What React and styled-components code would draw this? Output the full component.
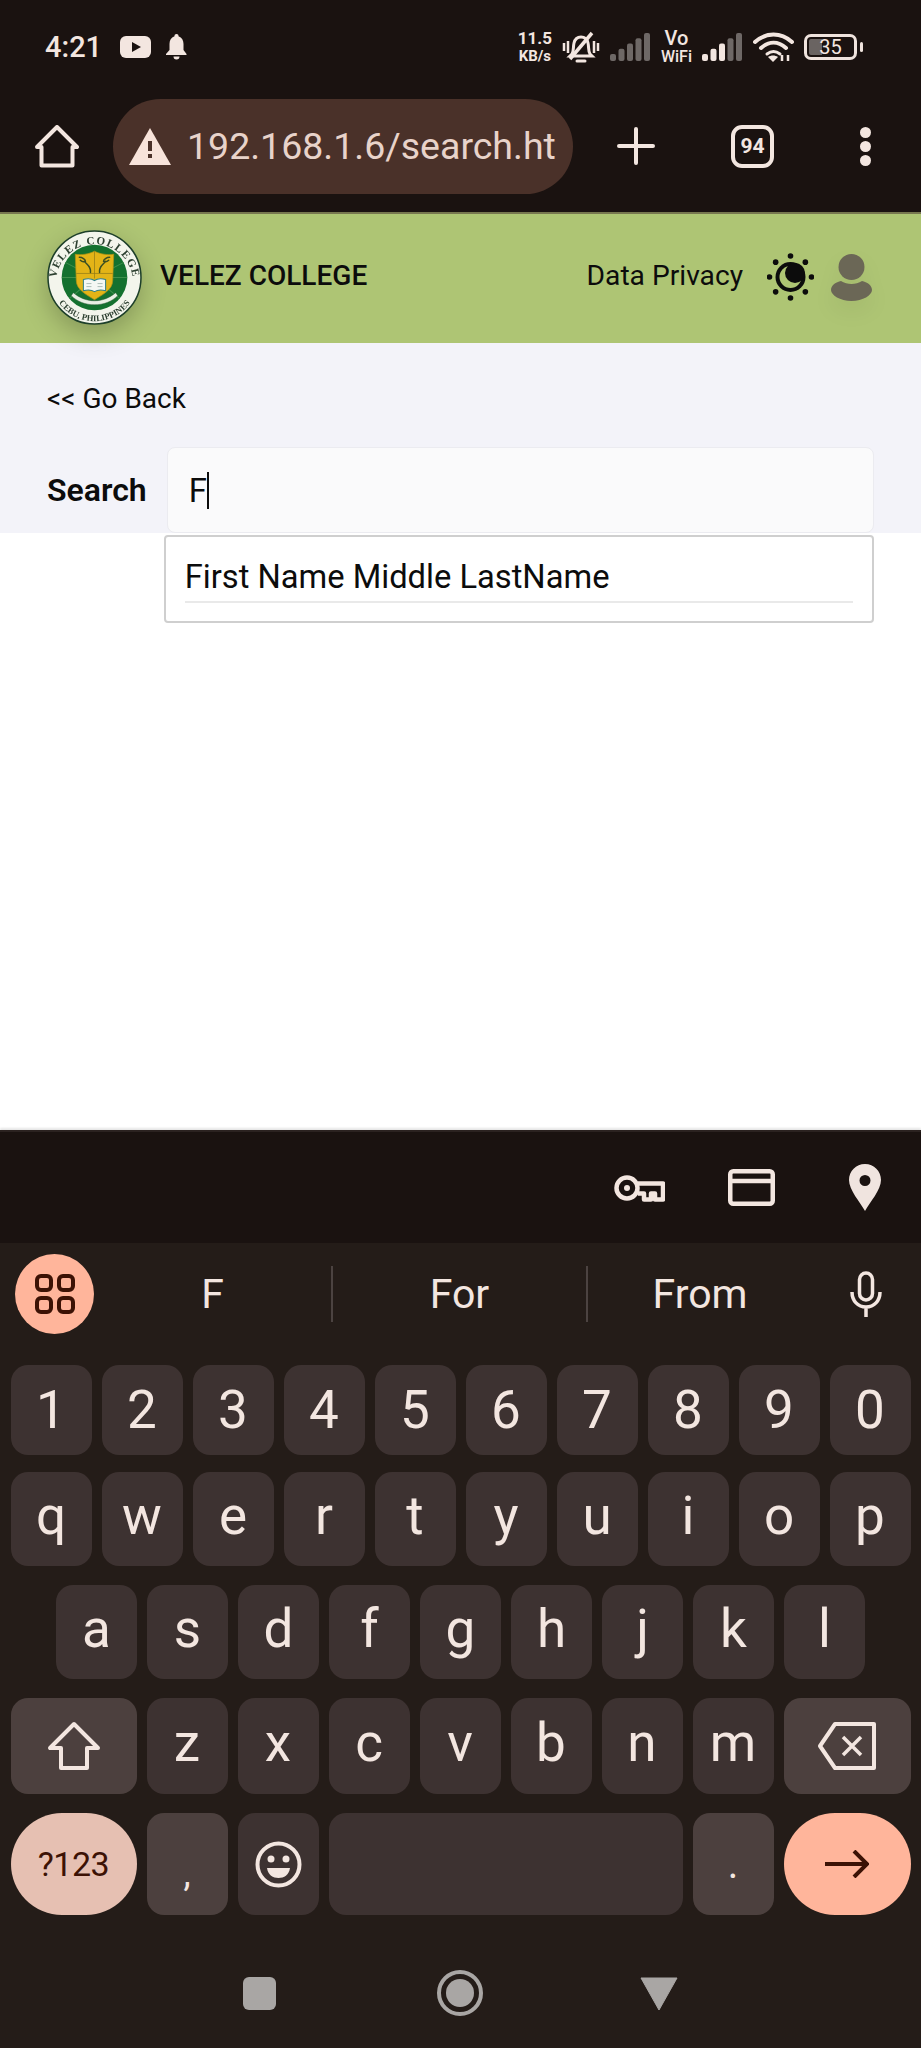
import React from 'react';
import styled, { createGlobalStyle } from 'styled-components';

const GlobalStyle = createGlobalStyle`
  html, body {
    margin: 0;
    padding: 0;
    background: #fff;
  }
  * {
    box-sizing: border-box;
  }
`;

const Phone = styled.div`
  width: 921px;
  height: 2048px;
  display: flex;
  flex-direction: column;
  overflow: hidden;
  font-family: Roboto, 'Liberation Sans', sans-serif;
  color: #0c0c0c;
  background: #fff;
`;

/* system + browser chrome */
const Chrome = styled.div`
  height: 214px;
  background: #1a1210;
  color: #f3e6e0;
  border-bottom: 2px solid #77774f;
`;

const StatusBar = styled.div`
  height: 94px;
  padding: 0 58px 0 45px;
  display: flex;
  align-items: center;
  justify-content: space-between;
`;

const StatusGroup = styled.div`
  display: flex;
  align-items: center;
  gap: ${(p) => p.$gap || 10}px;
`;

const Clock = styled.span`
  font-size: 29px;
  font-weight: 500;
  margin-right: 3px;
`;

const StackText = styled.div`
  display: flex;
  flex-direction: column;
  align-items: center;
  font-weight: 700;
  line-height: 1;
`;

const Speed = styled.span`
  font-size: 17px;
`;

const SpeedUnit = styled.span`
  font-size: 15px;
  margin-top: 2px;
`;

const Vo = styled.span`
  font-size: 20px;
  font-weight: 500;
  line-height: 20px;
`;

const WiFi = styled.span`
  font-size: 16px;
  font-weight: 500;
  line-height: 18px;
`;

const Battery = styled.div`
  position: relative;
  width: 53px;
  height: 26px;
  border: 3px solid #efe3dd;
  border-radius: 7px;
  display: flex;
  align-items: center;
  justify-content: center;
  font-size: 20px;
  font-weight: 400;
  margin-right: 6px;
  background: linear-gradient(90deg, #6a6462 0 32%, transparent 32%);
  background-clip: content-box;
  padding: 2px;

  &::after {
    content: '';
    position: absolute;
    right: -9px;
    top: 5px;
    width: 3px;
    height: 10px;
    border-radius: 2px;
    background: #efe3dd;
  }
`;

const BrowserBar = styled.div`
  height: 118px;
  padding: 0 0 14px 35px;
  display: flex;
  align-items: center;
`;

const UrlPill = styled.div`
  width: 460px;
  height: 95px;
  margin-left: 34px;
  padding: 0 6px 0 16px;
  border-radius: 48px;
  background: #4a3129;
  display: flex;
  align-items: center;
  gap: 16px;
`;

const UrlText = styled.div`
  flex: 1;
  overflow: hidden;
  white-space: nowrap;
  font-size: 37.5px;
  font-weight: 400;
  color: #e8d3ca;
`;

const PlusSlot = styled.div`
  margin-left: 44px;
  display: flex;
`;

const TabCount = styled.div`
  margin-left: 76px;
  width: 43px;
  height: 43px;
  border: 4px solid #f3e6e0;
  border-radius: 11px;
  display: flex;
  align-items: center;
  justify-content: center;
  font-size: 21px;
  font-weight: 700;
`;

const MoreDots = styled.div`
  margin-left: 86px;
  display: flex;
  flex-direction: column;
  gap: 3px;
`;

const Dot = styled.span`
  width: 11px;
  height: 11px;
  border-radius: 50%;
  background: #f3e6e0;
`;

/* web page */
const Page = styled.main`
  flex: 1;
  background: #fff;
`;

const Header = styled.header`
  position: relative;
  z-index: 1;
  height: 129px;
  padding: 0 49px 3px 47px;
  background: #aec574;
  display: flex;
  align-items: center;
  justify-content: space-between;
`;

const Brand = styled.div`
  display: flex;
  align-items: center;
  gap: 18px;
`;

const LogoWrap = styled.div`
  display: flex;
  filter: drop-shadow(0 9px 12px rgba(0, 0, 0, 0.22));
`;

const BrandName = styled.span`
  font-size: 28px;
  font-weight: 500;
  margin-top: -3px;
`;

const HeaderLinks = styled.div`
  display: flex;
  align-items: center;
`;

const PrivacyLink = styled.a`
  font-size: 28.2px;
  margin: -3px 24px 0 0;
`;

const PersonWrap = styled.div`
  display: flex;
  margin-left: 17px;
  filter: drop-shadow(0 10px 10px rgba(0, 0, 0, 0.05));
`;

const SearchPanel = styled.section`
  height: 190px;
  padding: 40px 47px 0;
  background: #f3f3f9;
`;

const BackLink = styled.a`
  display: block;
  font-size: 28px;
  line-height: 32px;
`;

const SearchRow = styled.div`
  margin-top: 32px;
  display: flex;
  align-items: center;
  gap: 20px;
`;

const SearchLabel = styled.label`
  font-size: 32px;
  font-weight: 600;
`;

const InputWrap = styled.div`
  position: relative;
  flex: 1;
`;

const SearchInput = styled.div`
  height: 86px;
  padding-left: 21px;
  border: 1px solid #ebebf0;
  border-radius: 8px;
  background: #fafafb;
  display: flex;
  align-items: center;
  font-size: 33px;
`;

const Caret = styled.span`
  width: 2px;
  height: 37px;
  background: #0c0c0c;
`;

const Dropdown = styled.div`
  position: absolute;
  top: calc(100% + 2px);
  left: -3px;
  right: 0;
  height: 88px;
  padding: 0 19px;
  border: 2px solid #cfcfcf;
  border-radius: 4px;
  background: #fff;
`;

const Option = styled.div`
  height: 66px;
  padding-top: 21px;
  border-bottom: 2px solid #e9e9e9;
  font-size: 32.7px;
  line-height: 38px;
`;

/* keyboard */
const Keyboard = styled.div`
  height: 918px;
  background: #241c18;
  color: #f3e6e0;
  border-top: 2px solid #2b2220;
  box-shadow: 0 -2px 2px rgba(0, 0, 0, 0.1);
`;

const AutofillBar = styled.div`
  height: 111px;
  padding-right: 40px;
  background: #1a1210;
  display: flex;
  align-items: center;
  justify-content: flex-end;
  gap: 74px;

  & > svg:first-child {
    margin-right: -11px;
  }
`;

const SuggestionBar = styled.div`
  height: 122px;
  padding: 0 0 20px 15px;
  display: flex;
  align-items: center;
`;

const GridButton = styled.div`
  width: 79px;
  height: 80px;
  border-radius: 50%;
  background: #ffb59b;
  display: flex;
  align-items: center;
  justify-content: center;
`;

const Suggestion = styled.div`
  width: ${(p) => p.$width}px;
  height: 56px;
  display: flex;
  align-items: center;
  justify-content: center;
  font-size: 41px;
  font-weight: 400;
  border-left: ${(p) => (p.$divided ? '2px solid #4c4341' : 'none')};
`;

const MicSlot = styled.div`
  margin-left: 38px;
  display: flex;
`;

const KeyRow = styled.div`
  height: ${(p) => p.$height}px;
  margin-top: ${(p) => p.$top}px;
  display: flex;
  justify-content: center;
  gap: 10px;
`;

const Key = styled.div`
  width: ${(p) => p.$width || 81}px;
  height: 100%;
  border-radius: ${(p) => (p.$pill ? '52px' : '17px')};
  background: ${(p) => p.$bg || '#3d3231'};
  display: flex;
  align-items: ${(p) => (p.$low ? 'flex-end' : 'center')};
  justify-content: center;
  font-size: ${(p) => p.$size || 53}px;
  font-weight: 400;
  letter-spacing: ${(p) => p.$tracking || 0}px;
  line-height: 1;
  color: ${(p) => p.$color || '#f3e6e0'};
  padding: ${(p) => p.$pad || '0 0 6px'};
`;

const NavBar = styled.div`
  flex: 1;
  height: 100px;
  margin-top: 28px;
  padding-left: 243px;
  display: flex;
  align-items: center;
`;

const NavSquare = styled.div`
  width: 33px;
  height: 33px;
  border-radius: 6px;
  background: #a9a6a4;
`;

const NavHome = styled.div`
  margin-left: 161px;
  width: 46px;
  height: 46px;
  border: 4px solid #a9a6a4;
  border-radius: 50%;
  display: flex;
  align-items: center;
  justify-content: center;

  &::after {
    content: '';
    width: 28px;
    height: 28px;
    border-radius: 50%;
    background: #a9a6a4;
  }
`;

const NavBack = styled.div`
  margin-left: 157px;
  display: flex;
`;

const fg = '#f3e6e0';
const accentDark = '#3c1205';

const YoutubeIcon = () => (
  <svg width="31" height="22" viewBox="0 0 31 22">
    <rect width="31" height="22" rx="6" fill={fg} />
    <path d="M12 6l9 5-9 5z" fill="#1a1210" />
  </svg>
);

const BellIcon = () => (
  <svg width="21" height="26" viewBox="0 0 21 26" fill={fg}>
    <path d="M10.500 0a2 2 0 0 1 2 2.300C16 3.500 17.500 6.500 17.500 10v6l3 4v1H0v-1l3.500-4v-6c0-3.500 1.500-6.500 5-7.700a2 2 0 0 1 2-2.300zM7.500 22.500h6a3 3 0 0 1-6 0z" />
  </svg>
);

const MutedBell = () => (
  <svg width="38" height="33" viewBox="0 0 38 33" fill="none" stroke={fg} strokeWidth="3">
    <path d="M10 23c2-3 1-7 2-11 1-4 4-6 7-6s6 2 7 6c1 4 0 8 2 11l2 2H8z" />
    <path d="M15 30h8" strokeLinecap="round" />
    <path d="M30 2L8 28" strokeWidth="3.500" />
    <path d="M2 12v8M6 10v12M32 10v12M36 12v8" strokeWidth="2.500" />
  </svg>
);

const SignalBars = ({ lit }) => (
  <svg width="41" height="28" viewBox="0 0 41 28">
    {[0, 1, 2, 3, 4].map((i) => (
      <rect
        key={i}
        x={i * 8.500}
        y={21 - i * 5.250}
        width="6"
        height={7 + i * 5.250}
        rx="2"
        fill={i < lit ? fg : '#6e6866'}
      />
    ))}
  </svg>
);

const WifiIcon = () => (
  <svg width="41" height="30" viewBox="0 0 41 30" fill="none" stroke={fg} strokeWidth="4" strokeLinecap="round">
    <path d="M2 10c11-10 26-10 37 0" />
    <path d="M8 16c8-7 17-7 25 0" />
    <path d="M14 22c4-3 9-3 13 0" strokeWidth="3" />
    <path d="M20 30l-5-5c3-2 7-2 10 0z" fill={fg} stroke="none" />
    <path d="M29 23v6M35 23v6" strokeWidth="2.500" strokeLinecap="butt" />
  </svg>
);

const HomeIcon = () => (
  <svg width="44" height="43" viewBox="0 0 44 43" fill="none" stroke={fg} strokeWidth="4" strokeLinejoin="round">
    <path d="M2 22L22 2l20 20h-4.500v18.500h-31V22z" />
  </svg>
);

const WarningIcon = () => (
  <svg width="42" height="37" viewBox="0 0 42 37">
    <path d="M21 0l21 37H0z" fill="#f7e3da" />
    <rect x="19" y="13" width="4" height="10" fill="#4a3129" />
    <rect x="19" y="26" width="4" height="4" fill="#4a3129" />
  </svg>
);

const PlusIcon = () => (
  <svg width="38" height="38" viewBox="0 0 38 38" stroke={fg} strokeWidth="4" strokeLinecap="round">
    <path d="M19 2v34M2 19h34" />
  </svg>
);

const CollegeLogo = () => (
  <svg width="95" height="95" viewBox="0 0 94 94">
    <defs>
      <path id="sealTop" d="M9 52a38 38 0 1 1 76 0" />
      <path id="sealBottom" d="M5 58a43.500 43.500 0 0 0 84 0" />
    </defs>
    <circle cx="47" cy="47" r="46" fill="#f3f5ec" stroke="#1d3f2a" strokeWidth="1.500" />
    <text fontFamily="'Liberation Serif', serif" fontSize="11" fontWeight="700" fill="#2c3f30" letterSpacing="1.200">
      <textPath href="#sealTop" startOffset="50%" textAnchor="middle">VELEZ COLLEGE</textPath>
    </text>
    <text fontFamily="'Liberation Serif', serif" fontSize="8.500" fontWeight="700" fill="#2c3f30">
      <textPath href="#sealBottom" startOffset="50%" textAnchor="middle">CEBU, PHILIPPINES</textPath>
    </text>
    <circle cx="47" cy="47" r="32.500" fill="#14712f" />
    <path d="M47 47L18 32M47 47L76 32M47 47L15 47M47 47L79 47M47 47L22 68M47 47L72 68" stroke="#3f8f4c" strokeWidth="1" />
    {/* shield */}
    <path d="M28 24c6 1 13 0 19-3 6 3 13 4 19 3l-1 26c0 9-10 14-18 19-8-5-18-10-18-19z" fill="#e3b417" stroke="#b39415" strokeWidth="0.700" />
    <path d="M47 21v27M29 43h36" stroke="#8f7a18" strokeWidth="0.700" />
    {/* torches */}
    <path d="M32 27c3 0 6 2 6 4-2 1-4 0-5-1M37 31c2 3 7 5 6 11M58 31c-2 3-7 5-6 11M62 27c-3 0-6 2-6 4 2 1 4 0 5-1" fill="none" stroke="#3b4f23" strokeWidth="1.500" strokeLinecap="round" />
    {/* book */}
    <path d="M36 49c4-1 8-1 11 1 3-2 7-2 11-1v11c-4-1-8-1-11 1-3-2-7-2-11-1z" fill="#f4f8f4" stroke="#2e7f86" strokeWidth="1" />
    <path d="M39 53h5M39 56h5M50 53h5M50 56h5" stroke="#9ab0a8" strokeWidth="0.800" />
    {/* ribbon */}
    <path d="M26 62c6 5 13 8 21 8s15-3 21-8l2 3c-6 6-14 9-23 9s-17-3-23-9z" fill="#e9efe4" stroke="#2c5a36" strokeWidth="0.500" />
  </svg>
);

const SunMoonIcon = () => (
  <svg width="47" height="48" viewBox="0 0 47 48">
    <circle cx="23.500" cy="24" r="15" fill="#0c0c0c" />
    <circle cx="23.500" cy="24" r="11" fill="#aec574" />
    <circle cx="28" cy="20" r="10" fill="#0c0c0c" />
    {[0, 45, 90, 135, 180, 225, 270, 315].map((a) => (
      <circle
        key={a}
        cx={23.500 + 21 * Math.cos((a * Math.PI) / 180)}
        cy={24 + 21 * Math.sin((a * Math.PI) / 180)}
        r="2.800"
        fill="#0c0c0c"
      />
    ))}
  </svg>
);

const PersonIcon = () => (
  <svg width="41" height="47" viewBox="0 0 41 47" fill="#6b6756">
    <circle cx="20.500" cy="13" r="13" />
    <path d="M20.500 47C9 47 0 41 0 36c0-5 5-8 10-9 3 2 7 3 10.500 3s7.500-1 10.500-3c5 1 10 4 10 9 0 5-9 11-20.500 11z" />
  </svg>
);

const KeyIcon = () => (
  <svg width="51" height="28" viewBox="0 0 51 28" fill="none" stroke={fg} strokeWidth="4.500">
    <circle cx="13" cy="14" r="10.500" />
    <circle cx="13" cy="14" r="3" fill={fg} stroke="none" />
    <path d="M24 9.500h25v16h-8v-6h-4v6h-7v-6h-6" strokeLinejoin="round" />
  </svg>
);

const CardIcon = () => (
  <svg width="47" height="37" viewBox="0 0 47 37" fill="none" stroke={fg} strokeWidth="4.500">
    <rect x="2.250" y="2.250" width="42.500" height="32.500" rx="3" />
    <path d="M2 12h43" />
  </svg>
);

const PinIcon = () => (
  <svg width="32" height="47" viewBox="0 0 32 47">
    <path
      fillRule="evenodd"
      fill="#f0e4df"
      d="M16 0c9 0 16 7 16 16 0 10-11 22-16 31C11 38 0 26 0 16 0 7 7 0 16 0zm0 11a5.500 5.500 0 1 0 0 11 5.500 5.500 0 0 0 0-11z"
    />
  </svg>
);

const GridIcon = () => (
  <svg width="40" height="40" viewBox="0 0 40 40" fill="none" stroke={accentDark} strokeWidth="4">
    <rect x="2" y="2" width="14" height="14" rx="4" />
    <rect x="24" y="2" width="14" height="14" rx="4" />
    <rect x="2" y="24" width="14" height="14" rx="4" />
    <rect x="24" y="24" width="14" height="14" rx="4" />
  </svg>
);

const MicIcon = () => (
  <svg width="32" height="46" viewBox="0 0 32 46" fill="none" stroke={fg} strokeWidth="3.500">
    <rect x="9.500" y="2" width="13" height="27" rx="6.500" />
    <path d="M2 21c0 9 6 15 14 15s14-6 14-15M16 36v10" />
  </svg>
);

const ShiftIcon = () => (
  <svg width="54" height="50" viewBox="0 0 54 50" fill="none" stroke={fg} strokeWidth="4" strokeLinejoin="round">
    <path d="M27 3L3 27h11v20h26V27h11z" />
  </svg>
);

const BackspaceIcon = () => (
  <svg width="58" height="48" viewBox="0 0 58 48" fill="none" stroke={fg} strokeWidth="4" strokeLinejoin="round">
    <path d="M17 2h39v44H17L2 24z" />
    <path d="M25 15l18 18M43 15L25 33" strokeWidth="3.500" />
  </svg>
);

const EmojiIcon = () => (
  <svg width="47" height="47" viewBox="0 0 47 47" fill="none" stroke={fg} strokeWidth="4">
    <circle cx="23.500" cy="23.500" r="21" />
    <circle cx="16" cy="18" r="3.500" fill={fg} stroke="none" />
    <circle cx="31" cy="18" r="3.500" fill={fg} stroke="none" />
    <path d="M12 27h23c-1 7-6 10-11.500 10S13 34 12 27z" fill={fg} stroke="none" />
  </svg>
);

const ArrowIcon = () => (
  <svg width="44" height="28" viewBox="0 0 44 28" fill="none" stroke={accentDark} strokeWidth="4">
    <path d="M0 14h42M29 1l13 13-13 13" />
  </svg>
);

const NavBackIcon = () => (
  <svg width="38" height="33" viewBox="0 0 38 33">
    <path d="M1 1h36L19 33z" fill="#a9a6a4" stroke="#a9a6a4" strokeLinejoin="round" />
  </svg>
);

const digits = ['1', '2', '3', '4', '5', '6', '7', '8', '9', '0'];
const topRow = ['q', 'w', 'e', 'r', 't', 'y', 'u', 'i', 'o', 'p'];
const midRow = ['a', 's', 'd', 'f', 'g', 'h', 'j', 'k', 'l'];
const lowRow = ['z', 'x', 'c', 'v', 'b', 'n', 'm'];

const modKey = '#4c403e';

const App = () => {
  return (
    <Phone>
      <GlobalStyle />
      <Chrome>
        <StatusBar>
          <StatusGroup $gap={15}>
            <Clock>4:21</Clock>
            <YoutubeIcon />
            <BellIcon />
          </StatusGroup>
          <StatusGroup>
            <StackText>
              <Speed>11.5</Speed>
              <SpeedUnit>KB/s</SpeedUnit>
            </StackText>
            <MutedBell />
            <SignalBars lit={0} />
            <StackText>
              <Vo>Vo</Vo>
              <WiFi>WiFi</WiFi>
            </StackText>
            <SignalBars lit={3} />
            <WifiIcon />
            <Battery>35</Battery>
          </StatusGroup>
        </StatusBar>
        <BrowserBar>
          <HomeIcon />
          <UrlPill>
            <WarningIcon />
            <UrlText>192.168.1.6/search.ht</UrlText>
          </UrlPill>
          <PlusSlot>
            <PlusIcon />
          </PlusSlot>
          <TabCount>94</TabCount>
          <MoreDots>
            <Dot />
            <Dot />
            <Dot />
          </MoreDots>
        </BrowserBar>
      </Chrome>

      <Page>
        <Header>
          <Brand>
            <LogoWrap>
              <CollegeLogo />
            </LogoWrap>
            <BrandName>VELEZ COLLEGE</BrandName>
          </Brand>
          <HeaderLinks>
            <PrivacyLink>Data Privacy</PrivacyLink>
            <SunMoonIcon />
            <PersonWrap>
              <PersonIcon />
            </PersonWrap>
          </HeaderLinks>
        </Header>
        <SearchPanel>
          <BackLink>&lt;&lt; Go Back</BackLink>
          <SearchRow>
            <SearchLabel>Search</SearchLabel>
            <InputWrap>
              <SearchInput>
                F
                <Caret />
              </SearchInput>
              <Dropdown>
                <Option>First Name Middle LastName</Option>
              </Dropdown>
            </InputWrap>
          </SearchRow>
        </SearchPanel>
      </Page>

      <Keyboard>
        <AutofillBar>
          <KeyIcon />
          <CardIcon />
          <PinIcon />
        </AutofillBar>
        <SuggestionBar>
          <GridButton>
            <GridIcon />
          </GridButton>
          <Suggestion $width={237}>F</Suggestion>
          <Suggestion $width={255} $divided>For</Suggestion>
          <Suggestion $width={226} $divided>From</Suggestion>
          <MicSlot>
            <MicIcon />
          </MicSlot>
        </SuggestionBar>
        <KeyRow $height={90} $top={0}>
          {digits.map((d) => (
            <Key key={d} $pad="0">{d}</Key>
          ))}
        </KeyRow>
        <KeyRow $height={94} $top={17}>
          {topRow.map((k) => (
            <Key key={k}>{k}</Key>
          ))}
        </KeyRow>
        <KeyRow $height={94} $top={19}>
          {midRow.map((k) => (
            <Key key={k}>{k}</Key>
          ))}
        </KeyRow>
        <KeyRow $height={96} $top={19}>
          <Key $width={126} $bg={modKey} $pad="0">
            <ShiftIcon />
          </Key>
          {lowRow.map((k) => (
            <Key key={k}>{k}</Key>
          ))}
          <Key $width={127} $bg={modKey} $pad="0">
            <BackspaceIcon />
          </Key>
        </KeyRow>
        <KeyRow $height={102} $top={19}>
          <Key $width={126} $pill $bg="#e6c0b2" $color={accentDark} $size={34} $tracking={-0.5} $pad="0">?123</Key>
          <Key $bg={modKey} $low $size={36} $pad="0 0 23px">,</Key>
          <Key $pad="0">
            <EmojiIcon />
          </Key>
          <Key $width={354} $pad="0" />
          <Key $bg={modKey} $low $size={40} $pad="0 0 30px">.</Key>
          <Key $width={127} $pill $bg="#ffb59b" $pad="0">
            <ArrowIcon />
          </Key>
        </KeyRow>
        <NavBar>
          <NavSquare />
          <NavHome />
          <NavBack>
            <NavBackIcon />
          </NavBack>
        </NavBar>
      </Keyboard>
    </Phone>
  );
};

export default App;
